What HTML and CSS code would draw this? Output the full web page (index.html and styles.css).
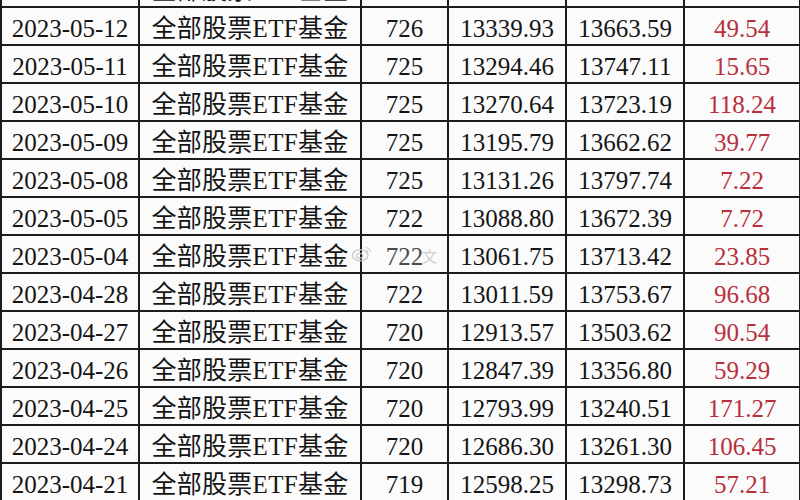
FILE: index.html
```html
<!DOCTYPE html>
<html lang="zh-CN">
<head>
<meta charset="utf-8">
<title>ETF</title>
<link rel="stylesheet" href="styles.css">
</head>
<body>
<div class="frame">
<table class="grid">
<colgroup>
<col class="c-date"><col class="c-name"><col class="c-num"><col class="c-a"><col class="c-b"><col class="c-d">
</colgroup>
<tbody>
<tr><td>2023-05-15</td><td class="cn">全部股票ETF基金</td><td>726</td><td>13402.18</td><td>13790.26</td><td class="red">36.10</td></tr>
<tr><td>2023-05-12</td><td class="cn">全部股票ETF基金</td><td>726</td><td>13339.93</td><td>13663.59</td><td class="red">49.54</td></tr>
<tr><td>2023-05-11</td><td class="cn">全部股票ETF基金</td><td>725</td><td>13294.46</td><td>13747.11</td><td class="red">15.65</td></tr>
<tr><td>2023-05-10</td><td class="cn">全部股票ETF基金</td><td>725</td><td>13270.64</td><td>13723.19</td><td class="red">118.24</td></tr>
<tr><td>2023-05-09</td><td class="cn">全部股票ETF基金</td><td>725</td><td>13195.79</td><td>13662.62</td><td class="red">39.77</td></tr>
<tr><td>2023-05-08</td><td class="cn">全部股票ETF基金</td><td>725</td><td>13131.26</td><td>13797.74</td><td class="red">7.22</td></tr>
<tr><td>2023-05-05</td><td class="cn">全部股票ETF基金</td><td>722</td><td>13088.80</td><td>13672.39</td><td class="red">7.72</td></tr>
<tr><td>2023-05-04</td><td class="cn wm-cell">全部股票ETF基金<span class="wm"><svg viewBox="0 0 24 20" width="22" height="19"><ellipse cx="10" cy="12" rx="8.5" ry="6" fill="none" stroke="#c9c9c9" stroke-width="1.6"/><ellipse cx="9.5" cy="12.5" rx="3.5" ry="2.6" fill="none" stroke="#c9c9c9" stroke-width="1.4"/><path d="M16 3.5a5 5 0 0 1 5 5M16 6.5a2.2 2.2 0 0 1 2.2 2.2" fill="none" stroke="#cfcfcf" stroke-width="1.4"/></svg></span></td><td class="wm-num">722<span class="wm-txt">文</span></td><td>13061.75</td><td>13713.42</td><td class="red">23.85</td></tr>
<tr><td>2023-04-28</td><td class="cn">全部股票ETF基金</td><td>722</td><td>13011.59</td><td>13753.67</td><td class="red">96.68</td></tr>
<tr><td>2023-04-27</td><td class="cn">全部股票ETF基金</td><td>720</td><td>12913.57</td><td>13503.62</td><td class="red">90.54</td></tr>
<tr><td>2023-04-26</td><td class="cn">全部股票ETF基金</td><td>720</td><td>12847.39</td><td>13356.80</td><td class="red">59.29</td></tr>
<tr><td>2023-04-25</td><td class="cn">全部股票ETF基金</td><td>720</td><td>12793.99</td><td>13240.51</td><td class="red">171.27</td></tr>
<tr><td>2023-04-24</td><td class="cn">全部股票ETF基金</td><td>720</td><td>12686.30</td><td>13261.30</td><td class="red">106.45</td></tr>
<tr><td>2023-04-21</td><td class="cn">全部股票ETF基金</td><td>719</td><td>12598.25</td><td>13298.73</td><td class="red">57.21</td></tr>
</tbody>
</table>
</div>
</body>
</html>
```
FILE: styles.css
```css
html, body {
  margin: 0;
  padding: 0;
  background: #fbfbfb;
}
.frame {
  width: 800px;
  height: 500px;
  overflow: hidden;
}
.grid {
  border-collapse: collapse;
  table-layout: fixed;
  width: 799px;
  margin-top: -32px;
  margin-left: 0;
  font-family: "Liberation Serif", "Tinos", "Times New Roman", "DejaVu Serif", serif;
  font-size: 25px;
  color: #151515;
}
.c-date { width: 138px; }
.c-name { width: 222px; }
.c-num { width: 87px; }
.c-a { width: 118px; }
.c-b { width: 118px; }
.c-d { width: 116px; }
.grid td {
  border: 2px solid #1c1c1c;
  height: 38px;
  padding: 5px 0 0 0;
  box-sizing: border-box;
  text-align: center;
  vertical-align: middle;
  white-space: nowrap;
  line-height: 28px;
}
.grid td.cn {
  font-family: "Liberation Serif", "Tinos", "Noto Sans CJK SC", serif;
  font-size: 25px;
  letter-spacing: 0.3px;
}
.grid td.red {
  color: #b8303c;
}
.wm-cell, .wm-num {
  position: relative;
}
.wm {
  position: absolute;
  right: -13px;
  top: 5px;
  opacity: 0.9;
}
.wm-num { color: #4a4a4a; }
.wm-txt {
  position: absolute;
  right: 10px;
  top: 6px;
  font-family: "Noto Sans CJK SC", sans-serif;
  font-size: 15px;
  color: #d0d0d0;
}
```
